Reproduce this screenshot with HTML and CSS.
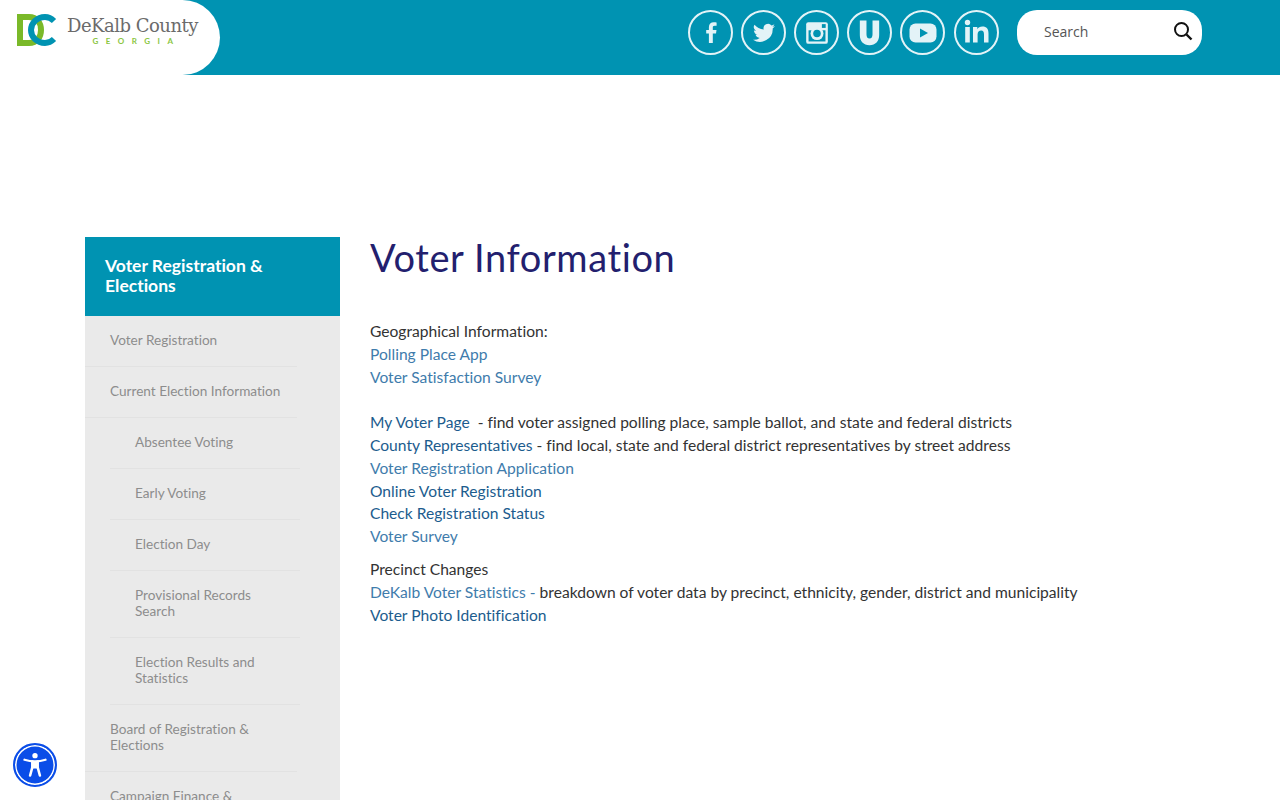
FILE: index.html
```html
<!DOCTYPE html>
<html lang="en">
<head>
  <meta charset="UTF-8">
  <meta name="viewport" content="width=device-width, initial-scale=1.0">
  <title>Voter Information</title>
  <link rel="stylesheet" href="styles.css">
</head>
<body>
  <header class="site-header">
    <a class="logo" href="#">
      <svg class="logo-mark" viewBox="0 0 40 32" width="40" height="32" aria-hidden="true">
        <path d="M3 3H12C20 3 24 9 24 16C24 23 20 29 12 29H3Z" fill="none" stroke="#7ab929" stroke-width="6"/>
        <path d="M37 7C34 4 31 3 28 3C20 3 14 9 14 16C14 23 20 29 28 29C31 29 34 28 37 25" fill="none" stroke="#0093b2" stroke-width="6"/>
      </svg>
      <span class="logo-text">
        <span class="logo-name">DeKalb County</span>
        <span class="logo-state">GEORGIA</span>
      </span>
    </a>
    <nav class="social">
      <a class="social-link" href="#" aria-label="Facebook">
        <svg viewBox="0 0 41 41" width="41" height="41"><path d="M22.800 31V21.600H26L26.500 17.900H22.800V15.600C22.800 14.500 23.100 13.800 24.700 13.800H26.600V10.500C26.300 10.400 25.100 10.300 23.700 10.300C20.900 10.300 18.900 12 18.900 15.200V17.900H16.200V21.600H18.900V31Z" fill="#e3f3f7"/></svg>
      </a>
      <a class="social-link" href="#" aria-label="Twitter">
        <svg viewBox="0 0 24 24" width="24" height="24"><path d="M23 5.100c-.8.400-1.700.6-2.600.7.900-.6 1.600-1.400 2-2.500-.9.500-1.800.9-2.900 1.100a4.500 4.500 0 0 0-7.800 4.100C8 8.300 4.700 6.500 2.500 3.800a4.500 4.500 0 0 0 1.400 6c-.7 0-1.400-.2-2-.6 0 2.200 1.500 4.100 3.600 4.500-.7.200-1.400.2-2 .1.600 1.800 2.300 3.100 4.200 3.100A9.100 9.100 0 0 1 1 18.800 12.800 12.800 0 0 0 20.700 7.400c.9-.6 1.700-1.400 2.300-2.300z" fill="#e3f3f7"/></svg>
      </a>
      <a class="social-link" href="#" aria-label="Instagram">
        <svg viewBox="0 0 24 24" width="26" height="26">
          <rect x="2" y="2" width="20" height="20" rx="2" fill="#e3f3f7"/>
          <rect x="4.200" y="9.500" width="15.600" height="10.300" fill="#0093b2"/>
          <circle cx="12" cy="12.500" r="6" fill="#e3f3f7"/>
          <circle cx="12" cy="12.500" r="3.500" fill="#0093b2"/>
          <rect x="16.500" y="3.800" width="3.500" height="3.500" fill="#0093b2"/>
        </svg>
      </a>
      <a class="social-link" href="#" aria-label="Nextdoor">
        <svg viewBox="0 0 24 24" width="29" height="29"><path d="M4 2H9.500V13.500C9.500 15.800 10.300 17 12 17C13.700 17 14.500 15.800 14.500 13.500V2H20V14C20 19 17 22.500 12 22.500C7 22.500 4 19 4 14Z" fill="#e3f3f7"/></svg>
      </a>
      <a class="social-link" href="#" aria-label="YouTube">
        <svg viewBox="0 0 28 20" width="28" height="20"><rect x="0.500" y="0.500" width="27" height="19" rx="6" fill="#e3f3f7"/><path d="M11 5.500V14.500L19 10Z" fill="#0093b2"/></svg>
      </a>
      <a class="social-link social-link-last" href="#" aria-label="LinkedIn">
        <svg viewBox="0 0 41 41" width="41" height="41"><circle cx="11.500" cy="10.500" r="2.700" fill="#e3f3f7"/><rect x="9.200" y="15" width="4.600" height="15.500" fill="#e3f3f7"/><path d="M17 15H21.300V17.300C22.200 15.700 24 14.600 26.400 14.600C30.700 14.600 32.500 17.200 32.500 21.500V30.500H28V22.400C28 20 27.200 18.600 25.200 18.600C23 18.600 21.600 20 21.600 22.500V30.500H17Z" fill="#e3f3f7"/></svg>
      </a>
    </nav>
    <form class="search">
      <span class="search-label">Search</span>
      <svg class="search-icon" viewBox="0 0 20 20" width="20" height="20"><circle cx="8.500" cy="8.500" r="6.500" fill="none" stroke="#111" stroke-width="2"/><path d="M13.500 13.500L18.500 18.500" stroke="#111" stroke-width="2.400"/></svg>
    </form>
  </header>

  <div class="page">
    <aside class="sidebar">
      <h2 class="sidebar-title">Voter Registration &amp; Elections</h2>
      <ul class="side-menu">
        <li class="side-item">Voter Registration</li>
        <li class="side-item">Current Election Information</li>
        <li class="side-sub">Absentee Voting</li>
        <li class="side-sub">Early Voting</li>
        <li class="side-sub">Election Day</li>
        <li class="side-sub">Provisional Records Search</li>
        <li class="side-sub">Election Results and Statistics</li>
        <li class="side-item">Board of Registration &amp; Elections</li>
        <li class="side-item">Campaign Finance &amp;</li>
      </ul>
    </aside>

    <main class="content">
      <h1 class="page-title">Voter Information</h1>
      <p class="block">
        Geographical Information:<br>
        <a class="link-light" href="#">Polling Place App</a><br>
        <a class="link-light" href="#">Voter Satisfaction Survey</a><br>
        <br>
        <a class="link-dark" href="#">My Voter Page</a>&nbsp; - find voter assigned polling place, sample ballot, and state and federal districts<br>
        <a class="link-dark" href="#">County Representatives</a> - find local, state and federal district representatives by street address<br>
        <a class="link-light" href="#">Voter Registration Application</a><br>
        <a class="link-dark" href="#">Online Voter Registration</a><br>
        <a class="link-dark" href="#">Check Registration Status</a><br>
        <a class="link-light" href="#">Voter Survey</a>
      </p>
      <p class="block">
        Precinct Changes<br>
        <a class="link-light" href="#">DeKalb Voter Statistics -</a> breakdown of voter data by precinct, ethnicity, gender, district and municipality<br>
        <a class="link-dark" href="#">Voter Photo Identification</a>
      </p>
    </main>
  </div>

  <button class="a11y-button" aria-label="Accessibility">
    <svg viewBox="0 0 24 24" width="28" height="28"><circle cx="12" cy="4" r="2.300" fill="#fff"/><path d="M3 7.500C6 8.500 9 9 12 9C15 9 18 8.500 21 7.500" fill="none" stroke="#fff" stroke-width="2" stroke-linecap="round"/><path d="M9.700 9V14L7.800 21M14.300 9V14L16.200 21" fill="none" stroke="#fff" stroke-width="2.200" stroke-linecap="round"/><rect x="9.700" y="9" width="4.600" height="6" fill="#fff"/></svg>
  </button>
</body>
</html>
```

FILE: styles.css
```css
body {
  margin: 0;
  font-family: Lato, "Open Sans", sans-serif;
  font-size: 16px;
  font-variant-ligatures: none;
  color: #333;
  background: #fff;
}

a {
  text-decoration: none;
}

.site-header {
  display: flex;
  align-items: flex-start;
  height: 75px;
  background-color: #0093b2;
}

.logo {
  display: flex;
  align-items: flex-start;
  gap: 10px;
  width: 220px;
  height: 75px;
  padding: 14px 0 0 17px;
  box-sizing: border-box;
  background: #fff;
  border-radius: 0 38px 38px 0;
}

.logo-text {
  display: flex;
  flex-direction: column;
  align-items: center;
}

.logo-name {
  font-family: "DejaVu Serif", serif;
  font-size: 18px;
  line-height: 23px;
  letter-spacing: -0.5px;
  color: #6b6b6b;
}

.logo-state {
  padding-left: 8px;
  font-size: 8px;
  font-weight: 700;
  line-height: 8px;
  letter-spacing: 7.500px;
  color: #8cc63f;
}

.social {
  display: flex;
  gap: 8px;
  margin: 10px 0 0 468px;
}

.social-link {
  display: flex;
  align-items: center;
  justify-content: center;
  width: 45px;
  height: 45px;
  box-sizing: border-box;
  border: 2px solid #e3f3f7;
  border-radius: 50%;
}

.social-link-last {
  margin-left: 1px;
}

.search {
  display: flex;
  align-items: center;
  justify-content: space-between;
  width: 185px;
  height: 45px;
  margin: 10px 0 0 18px;
  padding: 0 9px 0 27px;
  box-sizing: border-box;
  background: #fff;
  border-radius: 20px;
}

.search-label {
  margin-top: -2px;
  font-family: "Open Sans", sans-serif;
  font-size: 14px;
  color: #555;
}

.search-icon {
  margin-top: -3px;
}

.page {
  display: flex;
  gap: 30px;
  padding: 162px 0 0 85px;
}

.sidebar {
  flex: none;
  width: 255px;
}

.sidebar-title {
  margin: 0;
  padding: 19px 20px 20px;
  font-size: 17.500px;
  font-weight: 700;
  line-height: 20px;
  color: #fff;
  background-color: #0093b2;
}

.side-menu {
  margin: 0;
  padding: 0;
  list-style: none;
  font-size: 13.600px;
  line-height: 16px;
  color: #8d8d8d;
  background: #eaeaea;
}

.side-item {
  margin-right: 43px;
  padding: 16px 10px 18px 25px;
  border-bottom: 1px solid #e2e2e2;
}

.side-sub {
  margin: 0 40px 0 25px;
  padding: 16px 10px 18px 25px;
  border-bottom: 1px solid #e2e2e2;
}

.content {
  flex: 1;
}

.page-title {
  margin: 0 0 43px;
  font-size: 38px;
  font-weight: 400;
  line-height: 40px;
  letter-spacing: 0.600px;
  color: #231f6e;
}

.block {
  margin: 0 0 10px;
  font-size: 15.600px;
  line-height: 22.800px;
}

.link-light {
  color: #3f7cac;
}

.link-dark {
  color: #1c5c8e;
}

.a11y-button {
  position: fixed;
  left: 13px;
  bottom: 13px;
  display: flex;
  align-items: center;
  justify-content: center;
  width: 44px;
  height: 44px;
  padding: 0;
  background: #0a4de8;
  border: 2px solid #0a4de8;
  border-radius: 50%;
  box-shadow: inset 0 0 0 1.500px #fff;
}
```
